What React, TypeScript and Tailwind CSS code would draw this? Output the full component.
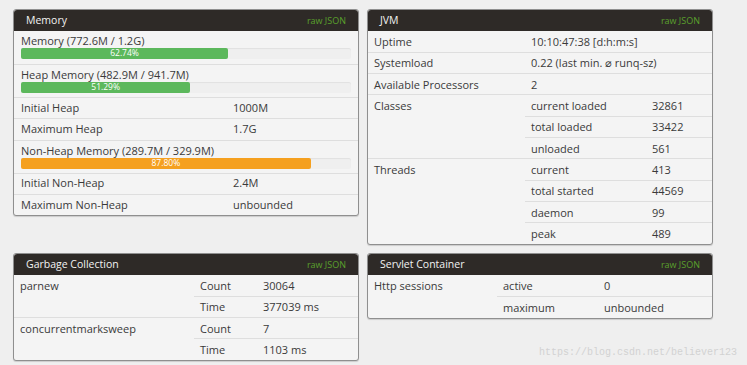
import React from 'react';

const font = { fontFamily: '"Open Sans", "DejaVu Sans", sans-serif' };

const PanelHeader: React.FC<{ title: string }> = ({ title }) => (
  <div className="flex h-[21px] items-center justify-between rounded-t-[3px] bg-[#2e2a27] px-[12px]">
    <span className="text-[10.5px] text-[#f2f2f2]">{title}</span>
    <span className="text-[9px] text-[#5aa02c]">raw JSON</span>
  </div>
);

const Panel: React.FC<{ title: string; children: React.ReactNode }> = ({ title, children }) => (
  <div className="rounded-[3px] border border-[#8f8f8f] bg-[#f4f4f4] shadow-[0_1px_1px_rgba(0,0,0,0.15)]">
    <PanelHeader title={title} />
    {children}
  </div>
);

const Bar: React.FC<{ label: string; pct: number; color: string; first?: boolean }> = ({
  label,
  pct,
  color,
  first,
}) => (
  <div className={`h-[33px] px-[7px] pt-[2px] ${first ? '' : 'border-t border-[#dedede]'}`}>
    <div className="h-[15px] text-[11px] leading-[15px] text-[#3a3a3a]">{label}</div>
    <div className="h-[11px] rounded-[2px] bg-[#efefef] shadow-[inset_0_1px_1px_rgba(0,0,0,0.06)]">
      <div
        className={`flex h-full items-center justify-center rounded-[2px] text-[8.5px] text-white ${color}`}
        style={{ width: `${pct}%` }}
      >
        {pct.toFixed(2)}%
      </div>
    </div>
  </div>
);

const td = 'h-[21.3px] border-t border-[#dedede] px-[6px] align-middle text-[11px] leading-[15px] text-[#3a3a3a]';
const tdTop = 'h-[21.3px] border-t border-[#dedede] px-[6px] align-top pt-[3px] text-[11px] leading-[15px] text-[#3a3a3a]';

const KV: React.FC<{ k: string; v: string }> = ({ k, v }) => (
  <div className="flex h-[21.3px] items-center border-t border-[#dedede] px-[7px] text-[11px] text-[#3a3a3a]">
    <span className="w-[212px]">{k}</span>
    <span>{v}</span>
  </div>
);

export default function App() {
  return (
    <div className="relative h-[365px] w-[747px] overflow-hidden bg-[#efefef]" style={font}>
      <div className="grid grid-cols-[346px_346px] items-start gap-x-[8px] gap-y-[8px] pl-[13px] pt-[9px]">
        <Panel title="Memory">
          <Bar label="Memory (772.6M / 1.2G)" pct={62.74} color="bg-[#5cb85c]" first />
          <Bar label="Heap Memory (482.9M / 941.7M)" pct={51.29} color="bg-[#5cb85c]" />
          <KV k="Initial Heap" v="1000M" />
          <KV k="Maximum Heap" v="1.7G" />
          <Bar label="Non-Heap Memory (289.7M / 329.9M)" pct={87.8} color="bg-[#f5a01f]" />
          <KV k="Initial Non-Heap" v="2.4M" />
          <KV k="Maximum Non-Heap" v="unbounded" />
        </Panel>

        <Panel title="JVM">
          <table className="w-full table-fixed border-collapse">
            <colgroup>
              <col className="w-[157px]" />
              <col className="w-[121px]" />
              <col />
            </colgroup>
            <tbody>
              <tr>
                <td className={`${td} border-t-0`}>Uptime</td>
                <td className={`${td} border-t-0`} colSpan={2}>10:10:47:38 [d:h:m:s]</td>
              </tr>
              <tr>
                <td className={td}>Systemload</td>
                <td className={td} colSpan={2}>0.22 (last min. ⌀ runq-sz)</td>
              </tr>
              <tr>
                <td className={td}>Available Processors</td>
                <td className={td} colSpan={2}>2</td>
              </tr>
              <tr>
                <td className={tdTop} rowSpan={3}>Classes</td>
                <td className={td}>current loaded</td>
                <td className={td}>32861</td>
              </tr>
              <tr>
                <td className={td}>total loaded</td>
                <td className={td}>33422</td>
              </tr>
              <tr>
                <td className={td}>unloaded</td>
                <td className={td}>561</td>
              </tr>
              <tr>
                <td className={tdTop} rowSpan={4}>Threads</td>
                <td className={td}>current</td>
                <td className={td}>413</td>
              </tr>
              <tr>
                <td className={td}>total started</td>
                <td className={td}>44569</td>
              </tr>
              <tr>
                <td className={td}>daemon</td>
                <td className={td}>99</td>
              </tr>
              <tr>
                <td className={td}>peak</td>
                <td className={td}>489</td>
              </tr>
            </tbody>
          </table>
        </Panel>

        <Panel title="Garbage Collection">
          <table className="w-full table-fixed border-collapse">
            <colgroup>
              <col className="w-[180px]" />
              <col className="w-[63px]" />
              <col />
            </colgroup>
            <tbody>
              <tr>
                <td className={`${tdTop} border-t-0`} rowSpan={2}>parnew</td>
                <td className={`${td} border-t-0`}>Count</td>
                <td className={`${td} border-t-0`}>30064</td>
              </tr>
              <tr>
                <td className={td}>Time</td>
                <td className={td}>377039 ms</td>
              </tr>
              <tr>
                <td className={tdTop} rowSpan={2}>concurrentmarksweep</td>
                <td className={td}>Count</td>
                <td className={td}>7</td>
              </tr>
              <tr>
                <td className={td}>Time</td>
                <td className={td}>1103 ms</td>
              </tr>
            </tbody>
          </table>
        </Panel>

        <Panel title="Servlet Container">
          <table className="w-full table-fixed border-collapse">
            <colgroup>
              <col className="w-[129px]" />
              <col className="w-[101px]" />
              <col />
            </colgroup>
            <tbody>
              <tr>
                <td className={`${tdTop} border-t-0`} rowSpan={2}>Http sessions</td>
                <td className={`${td} border-t-0`}>active</td>
                <td className={`${td} border-t-0`}>0</td>
              </tr>
              <tr>
                <td className={td}>maximum</td>
                <td className={td}>unbounded</td>
              </tr>
            </tbody>
          </table>
        </Panel>
      </div>

      <div
        className="absolute left-[539px] top-[345px] text-[10px] text-[#d2d2d2]"
        style={{ fontFamily: '"Liberation Mono", monospace' }}
      >
        https://blog.csdn.net/believer123
      </div>
    </div>
  );
}
